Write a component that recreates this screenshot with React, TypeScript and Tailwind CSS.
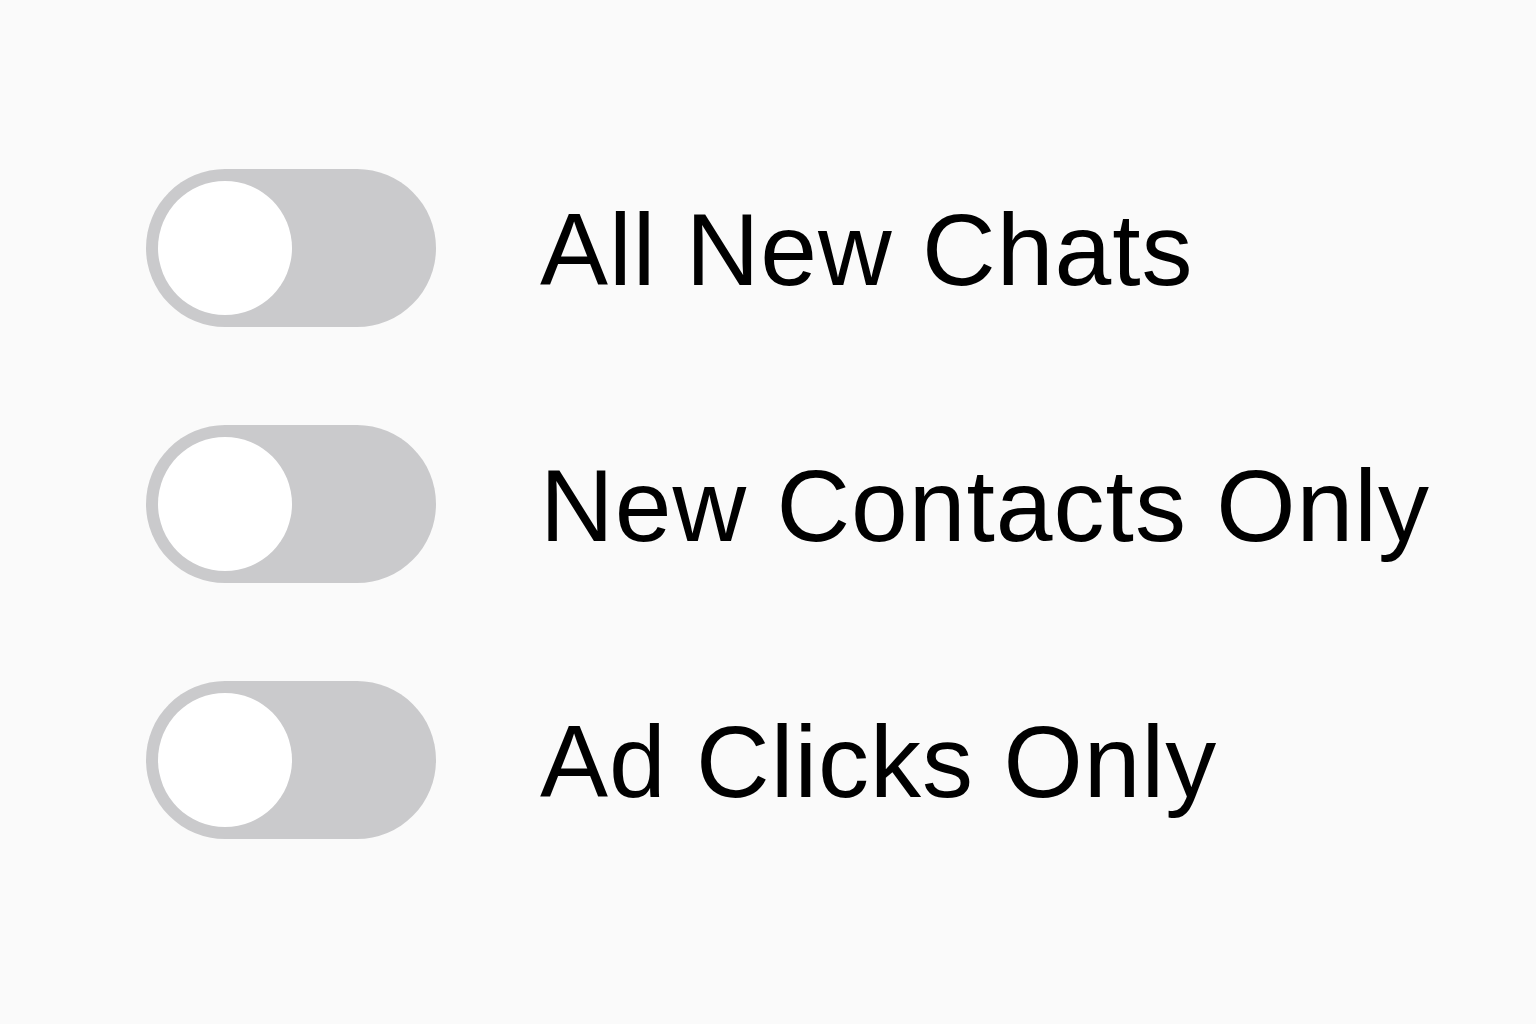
import { useState } from "react";

const options = ["All New Chats", "New Contacts Only", "Ad Clicks Only"];

function Toggle({ on, onClick }: { on: boolean; onClick: () => void }) {
  return (
    <button
      type="button"
      onClick={onClick}
      className={`flex h-[158px] w-[290px] shrink-0 items-center rounded-full p-[12px] ${
        on ? "justify-end bg-[#34c759]" : "justify-start bg-[#cacacc]"
      }`}
    >
      <span className="block h-[134px] w-[134px] rounded-full bg-white" />
    </button>
  );
}

export default function App() {
  const [enabled, setEnabled] = useState<boolean[]>([false, false, false]);

  return (
    <div
      className="min-h-screen w-full bg-[#fafafa] pl-[146px] pt-[169px]"
      style={{ fontFamily: '"Liberation Sans", Arial, sans-serif' }}
    >
      <div className="flex flex-col gap-[98px]">
        {options.map((label, i) => (
          <div key={label} className="flex items-center gap-[104px]">
            <Toggle
              on={enabled[i]}
              onClick={() => setEnabled(enabled.map((v, j) => (j === i ? !v : v)))}
            />
            <span className="pt-[4px] text-[102px] leading-none tracking-[1px] text-black">{label}</span>
          </div>
        ))}
      </div>
    </div>
  );
}
